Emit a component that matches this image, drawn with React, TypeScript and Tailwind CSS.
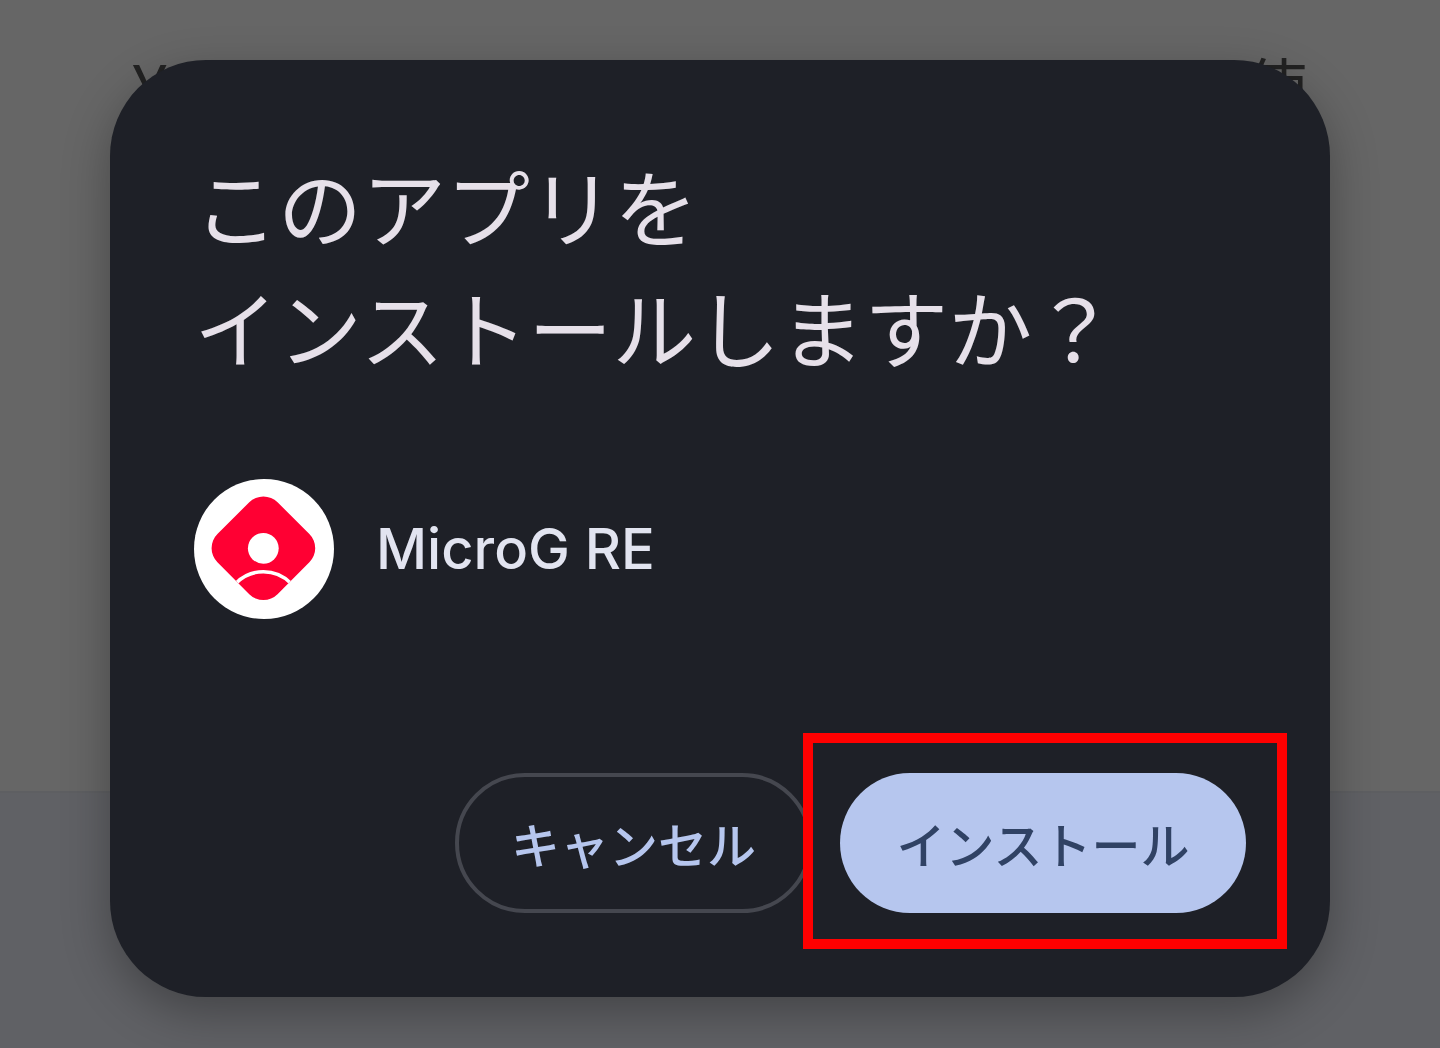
function AppIcon() {
  return (
    <svg viewBox="0 0 140 140" className="size-[140px] shrink-0" role="img" aria-label="MicroG RE">
      <defs>
        <clipPath id="badge">
          <rect x="26.9" y="26.7" width="85" height="85" rx="20" transform="rotate(45 69.4 69.2)" />
        </clipPath>
      </defs>
      <circle cx="70" cy="70" r="70" fill="#ffffff" />
      <g clipPath="url(#badge)">
        <rect width="140" height="140" fill="#ff0033" />
        <circle cx="69.3" cy="69.3" r="15.4" fill="#ffffff" />
        <circle cx="69.4" cy="131" r="38.3" fill="none" stroke="#ffffff" strokeWidth="3.5" />
      </g>
    </svg>
  );
}

function Backdrop() {
  return (
    <div className="absolute inset-0 flex flex-col" aria-hidden="true">
      <div className="flex flex-1 items-start justify-between bg-[#666666] px-[133px] pt-[39px] text-[63px] leading-[90px] text-[#222222]">
        <span>Y</span>
        <span>使</span>
      </div>
      <div className="h-[257px] border-t-2 border-[#5e5f62] bg-[#606165]" />
    </div>
  );
}

export default function App() {
  return (
    <main
      lang="ja"
      className="relative flex min-h-screen flex-col justify-center px-[110px] pt-[60px] pb-[51px] font-['Noto_Sans_CJK_JP',sans-serif]"
    >
      <Backdrop />
      <section
        role="dialog"
        aria-labelledby="dialog-title"
        className="relative rounded-[96px] bg-[#1e2027] p-[84px] shadow-[0_16px_48px_rgba(0,0,0,0.3)]"
      >
        <h1 id="dialog-title" className="text-[84px] leading-[121px] text-[#e6e0e9]">
          このアプリを
          <br />
          インストールしますか？
        </h1>
        <div className="mt-[93px] flex items-center gap-[42px]">
          <AppIcon />
          <p className="font-[Inter] text-[56px] leading-[80px] font-medium text-[#e2e4f0]">MicroG RE</p>
        </div>
        <div className="mt-[154px] flex justify-end gap-[28px]">
          <button
            type="button"
            className="h-[140px] rounded-full border-4 border-[#45474f] px-[52px] text-[49px] leading-[72px] font-medium text-[#b6c6ee]"
          >
            キャンセル
          </button>
          <div className="relative">
            <button
              type="button"
              className="h-[140px] min-w-[406px] rounded-full bg-[#b6c6ee] px-[56px] text-[49px] leading-[72px] font-medium text-[#304264]"
            >
              インストール
            </button>
            <div className="pointer-events-none absolute -top-[40px] -right-[41px] -bottom-[36px] -left-[37px] border-[10px] border-[#ff0000]" />
          </div>
        </div>
      </section>
    </main>
  );
}
